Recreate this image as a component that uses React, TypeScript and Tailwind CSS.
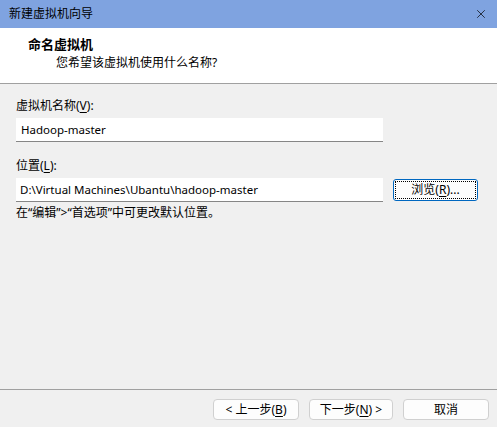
import { X } from 'lucide-react'

const font = { fontFamily: '"Noto Sans", "Noto Sans CJK SC", sans-serif' }

function U({ children }: { children: string }) {
  return <span className="underline underline-offset-[2px]">{children}</span>
}

function WizardButton({ children, className = '' }: { children: React.ReactNode; className?: string }) {
  return (
    <button
      type="button"
      className={`flex h-[21px] items-center justify-center rounded-[4px] border border-[#d0d0d0] bg-[#fdfdfd] text-[12px] leading-none text-black ${className}`}
    >
      {children}
    </button>
  )
}

export default function App() {
  return (
    <div
      className="flex h-[427px] w-[497px] flex-col overflow-hidden bg-[#f0f0f0] text-black"
      style={font}
    >
      {/* Title bar */}
      <div className="flex h-[28px] shrink-0 items-center justify-between bg-[#7fa3e0] pr-[9px] pl-[9px]">
        <span className="text-[12px] leading-none text-black">新建虚拟机向导</span>
        <X className="size-[14px] stroke-[1.2] text-black" />
      </div>

      {/* Header */}
      <div className="h-[56px] shrink-0 border-b border-[#a0a0a0] bg-white pt-[7px] pl-[28px]">
        <p className="text-[13px] leading-[18px] font-bold">命名虚拟机</p>
        <p className="mt-[2px] pl-[28px] text-[12px] leading-[16px]">您希望该虚拟机使用什么名称?</p>
      </div>

      {/* Body */}
      <div className="flex-1 pt-[14px] pl-[16px]">
        <p className="text-[12px] leading-[16px]">
          虚拟机名称(<U>V</U>):
        </p>
        <div className="mt-[4px] flex h-[24px] w-[367px] items-center border-b border-[#868686] bg-white pl-[5px] text-[11.5px]">
          Hadoop-master
        </div>

        <p className="mt-[16px] text-[12px] leading-[16px]">
          位置(<U>L</U>):
        </p>
        <div className="mt-[4px] flex items-center gap-[10px]">
          <div className="flex h-[24px] w-[367px] items-center border-b border-[#868686] bg-white pl-[4px] text-[11.5px]">
            D:\Virtual Machines\Ubantu\hadoop-master
          </div>
          <button
            type="button"
            className="h-[22px] w-[85px] rounded-[3px] border border-[#0067c0] bg-[#fdfdfd] p-[1px]"
          >
            <span className="flex h-full w-full items-center justify-center border border-dotted border-black text-[12px] leading-none">
              浏览(<U>R</U>)...
            </span>
          </button>
        </div>
        <p className="mt-[3px] text-[12px] leading-[16px]">在“编辑”&gt;“首选项”中可更改默认位置。</p>
      </div>

      {/* Footer */}
      <div className="flex h-[38px] shrink-0 justify-end gap-[10px] border-t border-[#a0a0a0] pt-[9px] pr-[8px]">
        <WizardButton className="w-[86px]">
          &lt; 上一步(<U>B</U>)
        </WizardButton>
        <WizardButton className="w-[84px]">
          下一步(<U>N</U>) &gt;
        </WizardButton>
        <WizardButton className="w-[86px]">取消</WizardButton>
      </div>
    </div>
  )
}
